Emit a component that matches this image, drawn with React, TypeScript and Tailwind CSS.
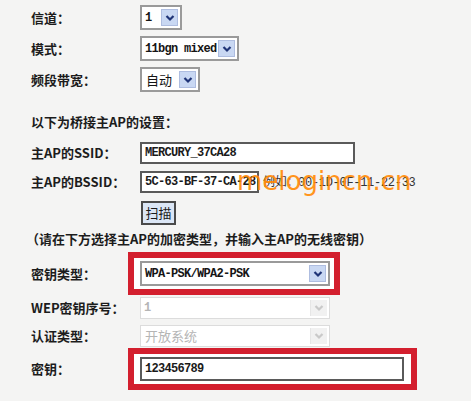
import React from "react";

const cjk = { fontFamily: '"Noto Sans CJK SC", "Noto Sans", sans-serif' };
const mono = { fontFamily: '"Liberation Mono", "Noto Sans CJK SC", monospace' };

function Arrow({ disabled }: { disabled?: boolean }) {
  return (
    <div
      className={
        disabled
          ? "flex h-full w-[17px] items-center justify-center border-l border-[#e6e6e6] bg-[#f1f1f1]"
          : "flex h-full w-[17px] items-center justify-center border border-[#aebde0] bg-[#c9d8f3]"
      }
    >
      <svg width="10" height="8" viewBox="0 0 10 8">
        <path
          d="M1.5 2 L5 5.5 L8.5 2"
          fill="none"
          stroke={disabled ? "#c9c9c9" : "#1f3477"}
          strokeWidth="2.2"
        />
      </svg>
    </div>
  );
}

function Select({
  value,
  w,
  cn,
  disabled,
}: {
  value: string;
  w: string;
  cn?: boolean;
  disabled?: boolean;
}) {
  return (
    <div
      className={`flex items-center justify-between bg-white ${w} ${
        disabled ? "h-[22px] border border-[#dcdcdc] bg-[#f7f7f7] text-[#b5b5b5]" : "h-[25px] border-2 border-[#9a9a9a] text-[#151515]"
      }`}
    >
      <span
        className={
          cn
            ? "whitespace-nowrap pl-[4px] text-[13px]"
            : "whitespace-nowrap pl-[3px] text-[12px] font-bold tracking-[-0.7px]"
        }
        style={cn ? cjk : mono}
      >
        {value}
      </span>
      <div className="h-full shrink-0 py-[2px] pr-[2px]">
        <Arrow disabled={disabled} />
      </div>
    </div>
  );
}

function Label({ text, w = "w-[109px]" }: { text: string; w?: string }) {
  return (
    <div className={`${w} shrink-0 whitespace-nowrap text-[13px] font-semibold text-[#1c1c1c]`} style={cjk}>
      {text}
    </div>
  );
}

function TextBox({ value, w }: { value: string; w: string }) {
  return (
    <div
      className={`flex h-[22px] ${w} items-center overflow-hidden whitespace-nowrap border-2 border-[#5a5a5a] bg-white pl-[3px] text-[12px] font-bold tracking-[-0.7px] text-[#1a1a1a]`}
      style={mono}
    >
      {value}
    </div>
  );
}

export default function App() {
  return (
    <div className="relative h-[401px] w-[471px] overflow-hidden bg-[#f4f4f3] pl-[31px] pt-[5px]">
      <div className="flex items-center">
        <Label text="信道：" />
        <Select value="1" w="w-[42px]" />
      </div>
      <div className="mt-[6px] flex items-center">
        <Label text="模式：" />
        <Select value="11bgn mixed" w="w-[99px]" />
      </div>
      <div className="mt-[6px] flex items-center">
        <Label text="频段带宽：" />
        <Select value="自动" w="w-[60px]" cn />
      </div>

      <div className="mt-[20px] text-[13px] font-semibold text-[#1c1c1c]" style={cjk}>
        以下为桥接主AP的设置：
      </div>

      <div className="mt-[10px] flex items-center">
        <Label text="主AP的SSID：" />
        <TextBox value="MERCURY_37CA28" w="w-[215px]" />
      </div>
      <div className="mt-[7px] flex items-center">
        <Label text="主AP的BSSID：" />
        <TextBox value="5C-63-BF-37-CA-28" w="w-[119px]" />
        <div className="ml-[4px] whitespace-nowrap text-[12px] tracking-[-0.3px] text-[#333]" style={mono}>
          <span style={cjk}>例如：</span>00-1D-0F-11-22-33
        </div>
      </div>
      <div className="mt-[8px] flex">
        <div className="w-[110px]" />
        <button
          className="h-[24px] w-[35px] border-2 border-[#4a4a4a] bg-[#dbe6f5] text-[13px] text-[#1a1a1a]"
          style={cjk}
        >
          扫描
        </button>
      </div>

      <div className="-ml-[5px] mt-[4px] whitespace-nowrap text-[13px] font-semibold text-[#1c1c1c]" style={cjk}>
        （请在下方选择主AP的加密类型，并输入主AP的无线密钥）
      </div>

      <div className="mt-[4px] flex items-center">
        <Label text="密钥类型：" w="w-[97px]" />
        <div className="border-[6px] border-[#d31f2e] bg-white py-[3px] pl-[6px] pr-[4px]">
          <Select value="WPA-PSK/WPA2-PSK" w="w-[190px]" />
        </div>
      </div>
      <div className="mt-[2px] flex items-center">
        <Label text="WEP密钥序号：" />
        <Select value="1" w="w-[190px]" disabled />
      </div>
      <div className="mt-[6px] flex items-center">
        <Label text="认证类型：" />
        <Select value="开放系统" w="w-[190px]" cn disabled />
      </div>
      <div className="mt-[1px] flex items-center">
        <Label text="密钥：" w="w-[97px]" />
        <div className="border-[6px] border-[#d31f2e] bg-white py-[3px] pl-[6px] pr-[7px]">
          <TextBox value="123456789" w="w-[264px] h-[24px]" />
        </div>
      </div>

      <div
        className="pointer-events-none absolute left-[237px] top-[168px] text-[26px] leading-none text-orange-400/90"
        style={{ fontFamily: '"DejaVu Sans", sans-serif' }}
      >
        melogincn.cn
      </div>
    </div>
  );
}
